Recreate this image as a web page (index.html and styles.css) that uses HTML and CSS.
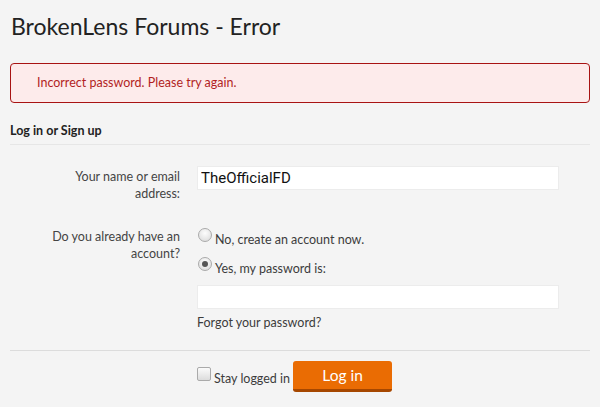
FILE: index.html
```html
<!DOCTYPE html>
<html lang="en">
<head>
    <meta charset="UTF-8">
    <title>BrokenLens Forums - Error</title>
    <link rel="stylesheet" href="styles.css">
</head>
<body>
    <h1 class="title">BrokenLens Forums - Error</h1>

    <div class="error-box">Incorrect password. Please try again.</div>

    <form class="login-form">
        <h2 class="section-head">Log in or Sign up</h2>

        <div class="form-row name-row">
            <label class="row-label" for="login">Your name or email address:</label>
            <div class="row-control">
                <input type="text" id="login" class="text-input" value="TheOfficialFD">
            </div>
        </div>

        <div class="form-row account-row">
            <div class="row-label">Do you already have an account?</div>
            <div class="row-control">
                <label class="choice"><input type="radio" name="register" class="radio"><span class="choice-text">No, create an account now.</span></label>
                <label class="choice"><input type="radio" name="register" class="radio" checked><span class="choice-text">Yes, my password is:</span></label>
                <input type="password" class="text-input pass-input">
                <a href="#" class="forgot">Forgot your password?</a>
            </div>
        </div>

        <div class="submit-row">
            <label class="remember"><input type="checkbox" class="check"><span class="choice-text">Stay logged in</span></label>
            <button type="submit" class="login-btn">Log in</button>
        </div>
    </form>
</body>
</html>
```

FILE: styles.css
```css
body {
    margin: 0;
    padding: 0 10px;
    background-color: #f4f4f4;
    font-family: "Lato", "Liberation Sans", sans-serif;
    font-size: 12.5px;
    color: #3c3c3c;
}
.title {
    margin: 0;
    padding: 11px 1px 0;
    font-size: 23px;
    font-weight: normal;
    line-height: 30px;
    color: #222;
}
.error-box {
    margin-top: 22px;
    height: 38px;
    line-height: 38px;
    padding: 0 26px;
    border: 1px solid #a81313;
    border-radius: 4px;
    background-color: #fdebeb;
    color: #b21f1f;
}
.login-form {
    margin: 0;
}
.section-head {
    margin: 19px 0 0;
    padding-bottom: 4px;
    font-size: 12.5px;
    font-weight: bold;
    line-height: 18px;
    color: #222;
    border-bottom: 1px solid #e6e6e6;
}
.form-row {
    display: flex;
    gap: 17px;
    padding-left: 40px;
}
.row-label {
    width: 130px;
    text-align: right;
    line-height: 17px;
    color: #444;
}
.name-row {
    margin-top: 21px;
}
.name-row .row-label {
    padding-top: 2px;
}
.row-control {
    display: flex;
    flex-direction: column;
    align-items: flex-start;
}
.text-input {
    box-sizing: border-box;
    width: 362px;
    height: 24px;
    margin: 0;
    padding: 0 3px;
    border: 1px solid #ececec;
    background: #fff;
    font-family: "Roboto", "Liberation Sans", sans-serif;
    font-size: 15px;
    color: #111;
    outline: none;
}
.account-row {
    margin-top: 26px;
}
.choice {
    display: flex;
    align-items: flex-start;
    gap: 3px;
    margin-bottom: 9px;
    color: #3c3c3c;
}
.choice-text {
    padding-top: 3px;
    line-height: 17px;
}
.radio {
    appearance: none;
    -webkit-appearance: none;
    width: 14px;
    height: 14px;
    margin: 0 0 0 1px;
    border: 1px solid #aaa;
    border-radius: 50%;
    background: radial-gradient(circle at 50% 35%, #fdfdfd, #d8d8d8);
    box-sizing: border-box;
    position: relative;
}
.radio:checked::after {
    content: "";
    position: absolute;
    left: 3px;
    top: 3px;
    width: 6px;
    height: 6px;
    border-radius: 50%;
    background: #555;
}
.pass-input {
    margin-top: -1px;
}
.forgot {
    margin-top: 5px;
    line-height: 17px;
    color: #3c3c3c;
    text-decoration: none;
}
.submit-row {
    display: flex;
    align-items: center;
    margin-top: 19px;
    padding: 10px 0 0 187px;
    border-top: 1px solid #dcdcdc;
    gap: 3px;
}
.remember {
    display: flex;
    align-items: flex-start;
    gap: 3px;
}
.check {
    appearance: none;
    -webkit-appearance: none;
    width: 14px;
    height: 14px;
    margin: 0;
    border: 1px solid #aaa;
    border-radius: 2px;
    background: linear-gradient(#fbfbfb, #dcdcdc);
}
.login-btn {
    width: 99px;
    height: 31px;
    padding: 0;
    border: none;
    border-bottom: 3px solid #a64700;
    border-radius: 3px;
    background-color: #ea6c03;
    color: #fff;
    font-family: "Lato", "Liberation Sans", sans-serif;
    font-size: 15.5px;
    cursor: pointer;
}
```
